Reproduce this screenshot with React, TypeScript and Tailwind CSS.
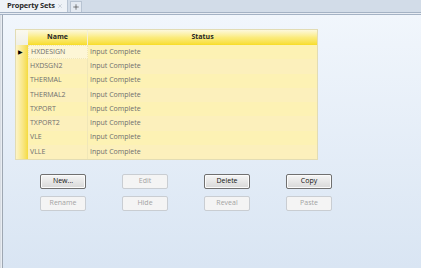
import { Plus, X } from "lucide-react";

const rows = [
  "HXDESIGN",
  "HXDSGN2",
  "THERMAL",
  "THERMAL2",
  "TXPORT",
  "TXPORT2",
  "VLE",
  "VLLE",
];

const buttons = [
  { label: "New...", enabled: true },
  { label: "Edit", enabled: false },
  { label: "Delete", enabled: true },
  { label: "Copy", enabled: true },
  { label: "Rename", enabled: false },
  { label: "Hide", enabled: false },
  { label: "Reveal", enabled: false },
  { label: "Paste", enabled: false },
];

export default function App() {
  return (
    <div className="w-[421px] h-[268px] flex flex-col overflow-hidden font-['Open_Sans',sans-serif] text-[7px]">
      {/* Tab strip */}
      <div className="h-[12px] bg-[#d2dce8] flex items-end gap-[2px]">
        <div className="h-[12px] shrink-0 bg-[#eef2f7] border-r border-[#b7c3d2] flex items-center pl-[7px] pr-[4px] gap-[2px] whitespace-nowrap">
          <span className="font-bold text-[7.5px] text-[#2a2a2a] leading-none tracking-[-0.2px]">Property Sets</span>
          <X className="w-[6px] h-[6px] text-[#a9b2bd]" strokeWidth={2} />
        </div>
        <div className="h-[11px] w-[12px] shrink-0 bg-[#e4eaf2] border border-b-0 border-[#b7c3d2] flex items-center justify-center">
          <Plus className="w-[8px] h-[8px] text-[#444]" strokeWidth={2} />
        </div>
      </div>
      <div className="h-[3px] bg-[#e8edf4] border-y border-[#a4b2c4]" />

      {/* Content */}
      <div className="flex-1 flex bg-gradient-to-b from-[#f1f6fc] to-[#d9e5f3]">
        <div className="w-[3px] border-x border-l-[#d8dde4] border-r-[#9ea7b2] bg-[#e9edf2]" />
        <div className="flex-1 pl-[12px] pt-[14px]">
          {/* Grid */}
          <div className="w-[303px] border border-[#e2dcb4] bg-[#fdf2b6]">
            <div className="flex h-[15px] bg-gradient-to-b from-[#fdf8dc] via-[#fbeb7c] to-[#f7dd22] text-[#262626] font-bold">
              <div className="w-[12px] bg-gradient-to-b from-[#fbf9ee] to-[#efefe6]" />
              <div className="w-[60px] flex items-center justify-center border-r border-[#f3f0d8]">Name</div>
              <div className="flex-1 flex items-center justify-center">Status</div>
            </div>
            {rows.map((name, i) => (
              <div
                key={name}
                className={`flex h-[14.25px] text-[#6e6e6e] ${i % 2 === 0 ? "bg-[#fdf2b4]" : "bg-[#fcf0bc]"}`}
              >
                <div className="w-[12px] bg-gradient-to-r from-[#fdf4c6] to-[#f5db3c] flex items-center pl-[2px]">
                  {i === 0 && <span className="text-[6px] text-black leading-none">▶</span>}
                </div>
                <div
                  className={`w-[60px] flex items-center pl-[2px] border-r border-[#f0e7b8] ${i === 0 ? "border border-dotted border-[#8a8a8a] bg-[#fdf6d6]" : ""}`}
                >
                  {name}
                </div>
                <div className="flex-1 flex items-center pl-[2px]">Input Complete</div>
              </div>
            ))}
          </div>

          {/* Buttons */}
          <div className="mt-[14px] ml-[25px] grid grid-cols-[repeat(4,46px)] gap-x-[36px] gap-y-[7px]">
            {buttons.map((b) =>
              b.enabled ? (
                <div
                  key={b.label}
                  className="h-[15px] rounded-[2px] border border-[#707070] bg-gradient-to-b from-[#f6f6f6] to-[#d8d8d8] flex items-center justify-center text-[#111] shadow-[inset_0_0_0_1px_#fbfbfb]"
                >
                  {b.label}
                </div>
              ) : (
                <div
                  key={b.label}
                  className="h-[15px] rounded-[2px] border border-[#c9cdd2] bg-[#f4f4f4] flex items-center justify-center text-[#a3a3a3]"
                >
                  {b.label}
                </div>
              )
            )}
          </div>
        </div>
      </div>
    </div>
  );
}
